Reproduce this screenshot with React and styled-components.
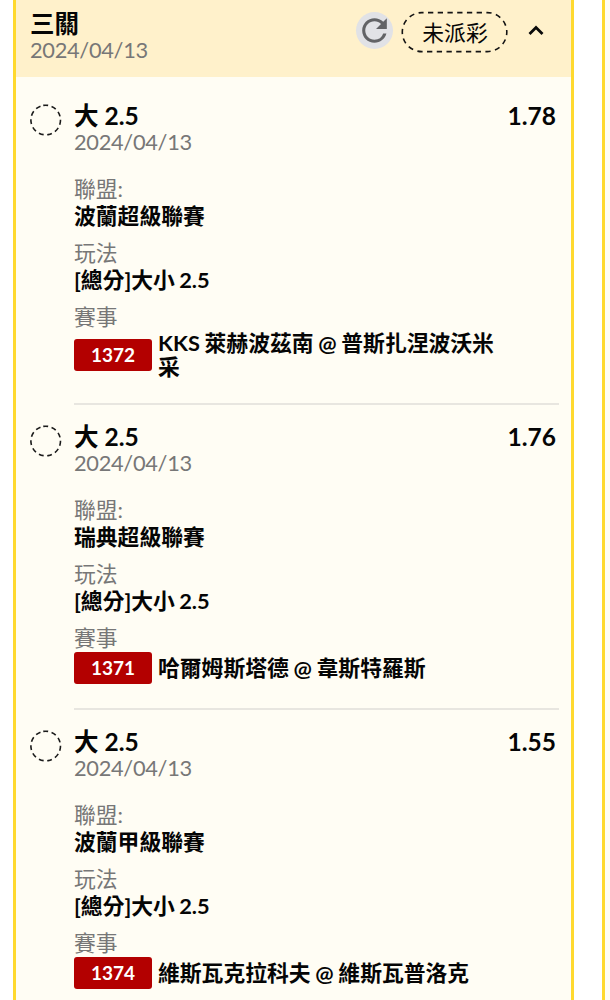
import React from 'react'

import styled, { createGlobalStyle } from 'styled-components'
import { MdRefresh } from 'react-icons/md'

const GlobalStyle = createGlobalStyle`
  * {
    box-sizing: border-box;
  }
  body {
    margin: 0;
    background: #fff;
    color: #050505;
    font-family: Lato, 'Noto Sans CJK TC', sans-serif;
    font-size: 21.8px;
  }
`

const Page = styled.div`
  display: flex;
  gap: 28px;
  width: 610px;
  height: 1000px;
  padding-left: 13px;
  overflow: hidden;
`

const Card = styled.section`
  flex: 0 0 561px;
  height: 1020px;
  background: #fffdf4;
  border: solid #ffd92e;
  border-width: 0 3px;
`

const Header = styled.header`
  display: flex;
  justify-content: space-between;
  height: 77px;
  padding: 10px 27px 0 14px;
  background: #fff1cb;
`

const HeaderTitle = styled.h2`
  margin: 0;
  padding-top: 1px;
  font-size: 24.5px;
  line-height: 26px;
  font-weight: 700;
`

const DateText = styled.div`
  color: #777;
  line-height: 26px;
  letter-spacing: -0.3px;
`

const Actions = styled.div`
  display: flex;
  align-items: center;
  height: 43px;
`

const RefreshButton = styled.button`
  display: flex;
  align-items: center;
  justify-content: center;
  width: 37px;
  height: 37px;
  margin: 0 8px 2px 0;
  padding: 0;
  border: none;
  border-radius: 50%;
  background: #e1e2e6;
  color: #626366;
  & svg {
    flex: none;
  }
`

const Pill = styled.div`
  display: grid;
  place-items: center;
  width: 108px;
  height: 43px;
  margin-right: 19px;
  & > * {
    grid-area: 1 / 1;
  }
`

const Chevron = styled.svg`
  width: 16px;
  height: 12px;
  margin-bottom: 3px;
`

const Bet = styled.article`
  display: grid;
  grid-template-columns: 32px 1fr;
  column-gap: 12px;
  padding: ${props => (props.$first ? 25 : 18)}px 12px 0 14px;
`

const Status = styled.svg`
  width: 32px;
  height: 32px;
  margin-top: 2px;
`

const BetBody = styled.div`
  border-bottom: 2px solid #e8e6e0;
  padding-bottom: 24px;
`

const BetTop = styled.div`
  display: flex;
  justify-content: space-between;
  padding-right: 3px;
  font-size: 24.5px;
  line-height: 27px;
  font-weight: 700;
`

const Field = styled.div`
  margin-top: ${props => (props.$first ? 20 : 10)}px;
  line-height: 27px;
`

const Label = styled.div`
  color: #777;
`

const Value = styled.div`
  font-weight: 700;
  word-spacing: -1px;
`

const Match = styled.div`
  display: flex;
  align-items: center;
  gap: 6px;
  padding-top: 1px;
`

const MatchNumber = styled.span`
  flex: none;
  width: 78px;
  height: 32px;
  border-radius: 3px;
  background: #b30000;
  color: #fff;
  font-size: 19px;
  font-weight: 700;
  line-height: 32px;
  text-align: center;
`

const Teams = styled.div`
  width: 345px;
  font-weight: 700;
  line-height: 24px;
  word-spacing: -0.6px;
`

const bets = [
  {
    odds: '1.78',
    league: '波蘭超級聯賽',
    number: '1372',
    teams: 'KKS 萊赫波茲南 @ 普斯扎涅波沃米采'
  },
  {
    odds: '1.76',
    league: '瑞典超級聯賽',
    number: '1371',
    teams: '哈爾姆斯塔德 @ 韋斯特羅斯'
  },
  {
    odds: '1.55',
    league: '波蘭甲級聯賽',
    number: '1374',
    teams: '維斯瓦克拉科夫 @ 維斯瓦普洛克'
  }
]

const BetItem = ({ bet, first }) => (
  <Bet $first={first}>
    <Status viewBox="0 0 32 32">
      <circle
        cx="15.7"
        cy="16"
        r="14.8"
        fill="none"
        stroke="#1a1a1a"
        strokeWidth="1.6"
        strokeDasharray="4.9 3.554"
        transform="rotate(-99.5 15.7 16)"
      />
    </Status>
    <BetBody>
      <BetTop>
        <span>大 2.5</span>
        <span>{bet.odds}</span>
      </BetTop>
      <DateText>2024/04/13</DateText>
      <Field $first>
        <Label>聯盟:</Label>
        <Value>{bet.league}</Value>
      </Field>
      <Field>
        <Label>玩法</Label>
        <Value>[總分]大小 2.5</Value>
      </Field>
      <Field>
        <Label>賽事</Label>
        <Match>
          <MatchNumber>{bet.number}</MatchNumber>
          <Teams>{bet.teams}</Teams>
        </Match>
      </Field>
    </BetBody>
  </Bet>
)

const App = () => (
  <>
    <GlobalStyle />
    <Page>
      <Card>
        <Header>
          <div>
            <HeaderTitle>三關</HeaderTitle>
            <DateText>2024/04/13</DateText>
          </div>
          <Actions>
            <RefreshButton>
              <MdRefresh size={37} />
            </RefreshButton>
            <Pill>
              <svg width="108" height="43" viewBox="0 0 108 43">
                <rect
                  x="1.3"
                  y="2.6"
                  width="104.5"
                  height="39"
                  rx="19.5"
                  fill="none"
                  stroke="#141414"
                  strokeWidth="1.6"
                  strokeDasharray="5.3 4.43"
                  strokeDashoffset="-6.2"
                />
              </svg>
              <span>未派彩</span>
            </Pill>
            <Chevron viewBox="0 0 16 12">
              <path
                d="M1.5 10L8 3.5L14.5 10"
                fill="none"
                stroke="#0a0a0a"
                strokeWidth="2.8"
              />
            </Chevron>
          </Actions>
        </Header>
        {bets.map((bet, i) => (
          <BetItem key={bet.number} bet={bet} first={i === 0} />
        ))}
      </Card>
      <Card />
    </Page>
  </>
)

export default App
